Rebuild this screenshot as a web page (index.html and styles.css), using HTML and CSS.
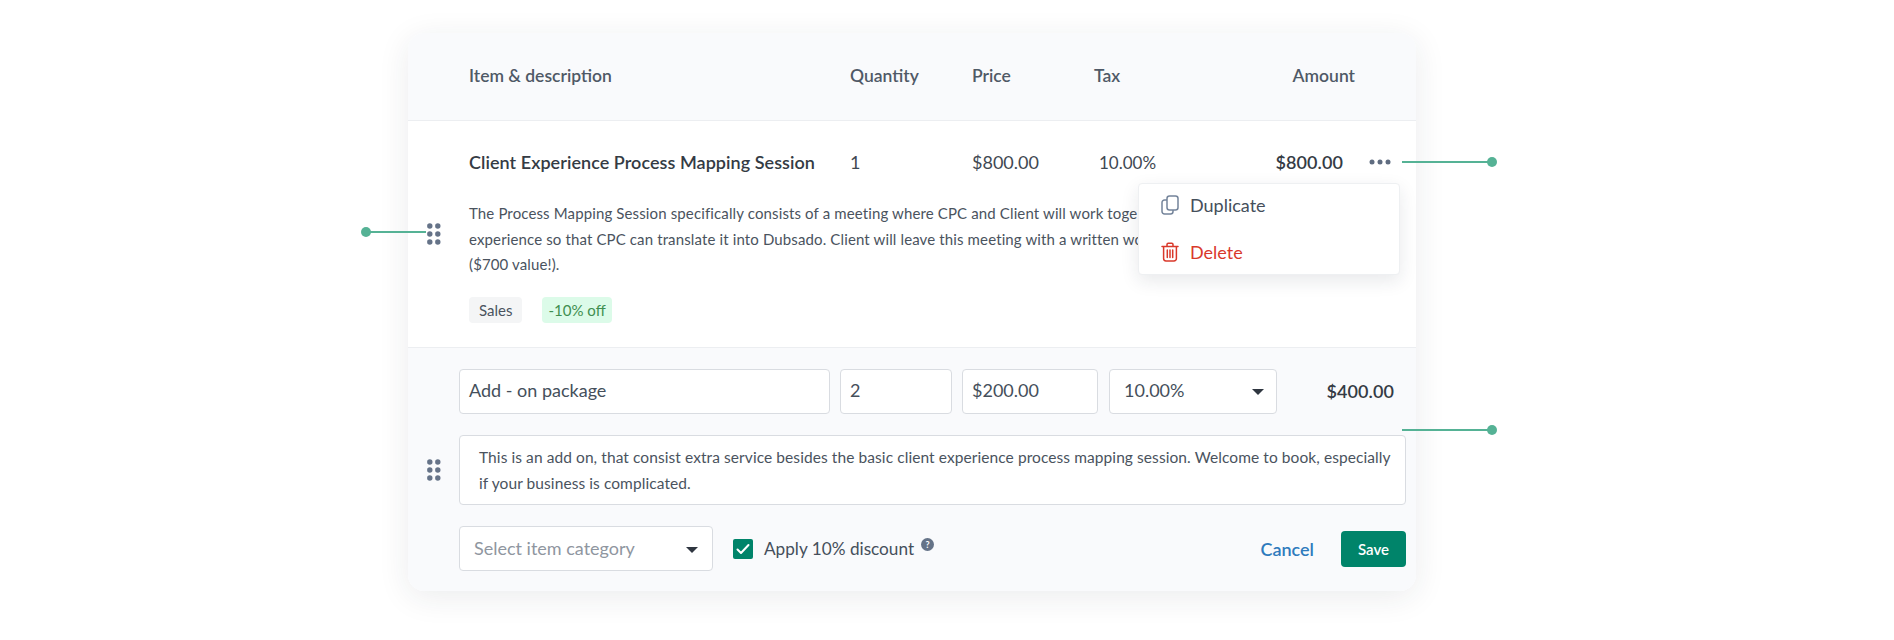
FILE: index.html
```html
<!DOCTYPE html>
<html lang="en">
<head>
<meta charset="utf-8">
<title>Line items</title>
<link rel="stylesheet" href="styles.css">
</head>
<body>
<main class="stage">
  <span class="pin pin-left"></span>
  <span class="pin pin-right pin-top"></span>
  <span class="pin pin-right pin-bottom"></span>
  <section class="card">
    <header class="head grid">
      <span>Item &amp; description</span>
      <span>Quantity</span>
      <span>Price</span>
      <span>Tax</span>
      <span class="amount-head">Amount</span>
    </header>
    <article class="item">
      <div class="item-row grid">
        <strong class="item-name">Client Experience Process Mapping Session</strong>
        <span>1</span>
        <span>$800.00</span>
        <span class="item-tax">10.00%</span>
        <strong class="item-amount">$800.00</strong>
        <svg class="more" width="22" height="6" viewBox="0 0 22 6"><circle cx="3" cy="3" r="2.500"/><circle cx="11" cy="3" r="2.500"/><circle cx="19" cy="3" r="2.500"/></svg>
      </div>
      <p class="desc">The Process Mapping Session specifically consists of a meeting where CPC and Client will work toge<span class="hidden-tail">ther to map out the client</span><br>experience so that CPC can translate it into Dubsado. Client will leave this meeting with a written wor<span class="hidden-tail">kflow document</span><br>($700 value!).</p>
      <div class="chips">
        <span class="chip">Sales</span>
        <span class="chip chip-off">-10% off</span>
      </div>
      <svg class="handle handle-one" width="14" height="22" viewBox="0 0 14 22"><circle cx="2.800" cy="3" r="2.700"/><circle cx="10.800" cy="3" r="2.700"/><circle cx="2.800" cy="11" r="2.700"/><circle cx="10.800" cy="11" r="2.700"/><circle cx="2.800" cy="19" r="2.700"/><circle cx="10.800" cy="19" r="2.700"/></svg>
      <div class="menu">
        <div class="menu-item">
          <svg width="18" height="20" viewBox="0 0 18 20" fill="none" stroke="#74849a" stroke-width="1.5" stroke-linejoin="round"><rect x="6" y="1" width="11" height="14" rx="2.500"/><path d="M6 5H3.500A2.500 2.500 0 0 0 1 7.500V16.500A2.500 2.500 0 0 0 3.500 19H9.500A2.500 2.500 0 0 0 12 16.500V15"/></svg>
          <span>Duplicate</span>
        </div>
        <div class="menu-item menu-delete">
          <svg width="18" height="20" viewBox="0 0 18 20" fill="none" stroke="#d9382b" stroke-width="1.5" stroke-linecap="round" stroke-linejoin="round"><path d="M1 4.500H17M6 4.500V2.500A1.200 1.200 0 0 1 7.200 1.300H10.800A1.200 1.200 0 0 1 12 2.500V4.500M2.600 4.500V16.600A2.400 2.400 0 0 0 5 19H13A2.400 2.400 0 0 0 15.400 16.600V4.500M6.300 8V15.500M9 8V15.500M11.700 8V15.500"/></svg>
          <span>Delete</span>
        </div>
      </div>
    </article>
    <form class="edit">
      <div class="edit-row">
        <div class="field field-name">Add - on package</div>
        <div class="field field-qty">2</div>
        <div class="field field-price">$200.00</div>
        <div class="field field-tax"><span>10.00%</span><i class="caret"></i></div>
        <strong class="edit-amount">$400.00</strong>
      </div>
      <div class="notes">This is an add on, that consist extra service besides the basic client experience process mapping session. Welcome to book, especially<br>if your business is complicated.</div>
      <svg class="handle handle-two" width="14" height="22" viewBox="0 0 14 22"><circle cx="2.800" cy="3" r="2.700"/><circle cx="10.800" cy="3" r="2.700"/><circle cx="2.800" cy="11" r="2.700"/><circle cx="10.800" cy="11" r="2.700"/><circle cx="2.800" cy="19" r="2.700"/><circle cx="10.800" cy="19" r="2.700"/></svg>
      <div class="edit-foot">
        <div class="field field-cat"><span>Select item category</span><i class="caret"></i></div>
        <span class="check"><svg width="14" height="12" viewBox="0 0 14 12" fill="none" stroke="#fff" stroke-width="2" stroke-linecap="round" stroke-linejoin="round"><path d="M1.500 6.500L5 10L12.500 2"/></svg></span>
        <span class="check-label">Apply 10% discount</span>
        <span class="help">?</span>
        <span class="cancel">Cancel</span>
        <span class="save">Save</span>
      </div>
    </form>
  </section>
</main>
</body>
</html>
```
FILE: styles.css
```css
* { box-sizing: border-box; }
html, body { margin: 0; background: #fff; }
body { font-family: "Lato", "Open Sans", sans-serif; color: #454f5b; }
.stage { position: relative; width: 1894px; height: 640px; padding: 33px 0 0 408px; overflow: hidden; }
.card { position: relative; width: 1008px; height: 558px; border-radius: 16px; background: #fff; box-shadow: 0 6px 32px rgba(30, 40, 60, .09); display: flex; flex-direction: column; }
.grid { display: grid; grid-template-columns: 381px 122px 122px 1fr auto; padding-left: 61px; align-items: center; }
.head { height: 88px; flex: none; padding: 0 61px 2px 61px; background: #f9fafc; border-bottom: 1px solid #eceef1; border-radius: 16px 16px 0 0; font-size: 17.500px; font-weight: 600; color: #4f5966; }
.item { position: relative; height: 227px; flex: none; border-bottom: 1px solid #eceef1; }
.item-row { grid-template-columns: 381px 122px 122px 1fr auto auto; height: 80px; padding: 2px 25px 0 61px; font-size: 18px; color: #3f4852; }
.item-name { font-weight: 600; letter-spacing: .05px; color: #343b44; white-space: nowrap; }
.item-tax { padding-left: 5px; font-size: 17px; }
.item-amount { font-weight: 600; letter-spacing: .1px; color: #343b44; margin-right: 26px; }
.more { fill: #5f6c80; }
.desc { margin: 0 0 0 61px; font-size: 15px; letter-spacing: .13px; line-height: 25.500px; color: #4a535e; white-space: nowrap; }
.hidden-tail { visibility: hidden; }
.chips { display: flex; gap: 20px; margin: 19px 0 0 61px; }
.chip { height: 26px; padding: 0 10px; display: flex; align-items: center; border-radius: 4px; background: #f4f5f6; font-size: 15px; color: #4a535e; }
.chip-off { background: #dcfbe9; color: #3f8f50; padding: 0 6px; }
.handle { position: absolute; left: 19px; fill: #657388; }
.handle-one { top: 102px; }
.handle-two { top: 111px; }
.menu { position: absolute; left: 730px; top: 62px; width: 262px; height: 92px; background: #fff; border: 1px solid #eef0f2; border-radius: 4px; box-shadow: 0 6px 18px rgba(30, 40, 60, .1); display: flex; flex-direction: column; padding: 1px 0 0 22px; gap: 7px; }
.menu-item { display: flex; align-items: center; gap: 11px; height: 40px; font-size: 18px; color: #454f5b; }
.menu-delete { color: #d9382b; }
.edit { position: relative; flex: 1; background: #f9fafc; border-radius: 0 0 16px 16px; padding: 21px 10px 0 51px; }
.edit-row { display: flex; gap: 10px; align-items: center; }
.field { height: 45px; background: #fff; border: 1.500px solid #d9dce1; border-radius: 4px; display: flex; align-items: center; justify-content: space-between; font-size: 18px; color: #454f5b; padding: 0 12px 3px 9px; }
.field-name { width: 371px; }
.field-qty { width: 112px; }
.field-price { width: 136px; }
.field-tax { width: 168px; margin-left: 1px; padding-left: 14px; }
.edit-amount { margin-left: auto; margin-right: 12px; font-size: 18px; font-weight: 600; letter-spacing: .1px; color: #343b44; padding-bottom: 2px; }
.caret { width: 0; height: 0; border-left: 6px solid transparent; border-right: 6px solid transparent; border-top: 6px solid #2f3640; margin-top: 3px; }
.notes { height: 70px; margin-top: 21px; background: #fff; border: 1.500px solid #d9dce1; border-radius: 4px; padding: 9px 19px; font-size: 15.500px; letter-spacing: .08px; line-height: 25.500px; color: #4a535e; white-space: nowrap; }
.edit-foot { display: flex; align-items: center; margin-top: 21px; }
.field-cat { width: 254px; padding-left: 14px; padding-right: 14px; padding-bottom: 1px; color: #8f96a0; }
.check { width: 20px; height: 20px; margin-left: 20px; background: #00846a; border-radius: 2px; display: flex; align-items: center; justify-content: center; }
.check-label { margin-left: 11px; font-size: 17.200px; color: #454f5b; }
.help { width: 13px; height: 13px; margin: 0 0 9px 7px; border-radius: 50%; background: #657388; color: #fff; font-size: 9px; font-weight: 700; display: flex; align-items: center; justify-content: center; }
.cancel { margin-left: auto; font-size: 18px; font-weight: 600; color: #2f7bbd; }
.save { width: 65px; height: 36px; margin-left: 27px; background: #00846a; border-radius: 4px; color: #fff; font-size: 15px; font-weight: 600; display: flex; align-items: center; justify-content: center; }
.pin { position: absolute; height: 2px; background: #55b295; z-index: 2; }
.pin::after { content: ""; position: absolute; top: -4px; width: 10px; height: 10px; border-radius: 50%; background: #55b295; }
.pin-left { left: 366px; top: 231px; width: 60px; }
.pin-left::after { left: -5px; }
.pin-right { left: 1402px; width: 90px; }
.pin-right::after { right: -5px; }
.pin-top { top: 161px; }
.pin-bottom { top: 429px; }
```
